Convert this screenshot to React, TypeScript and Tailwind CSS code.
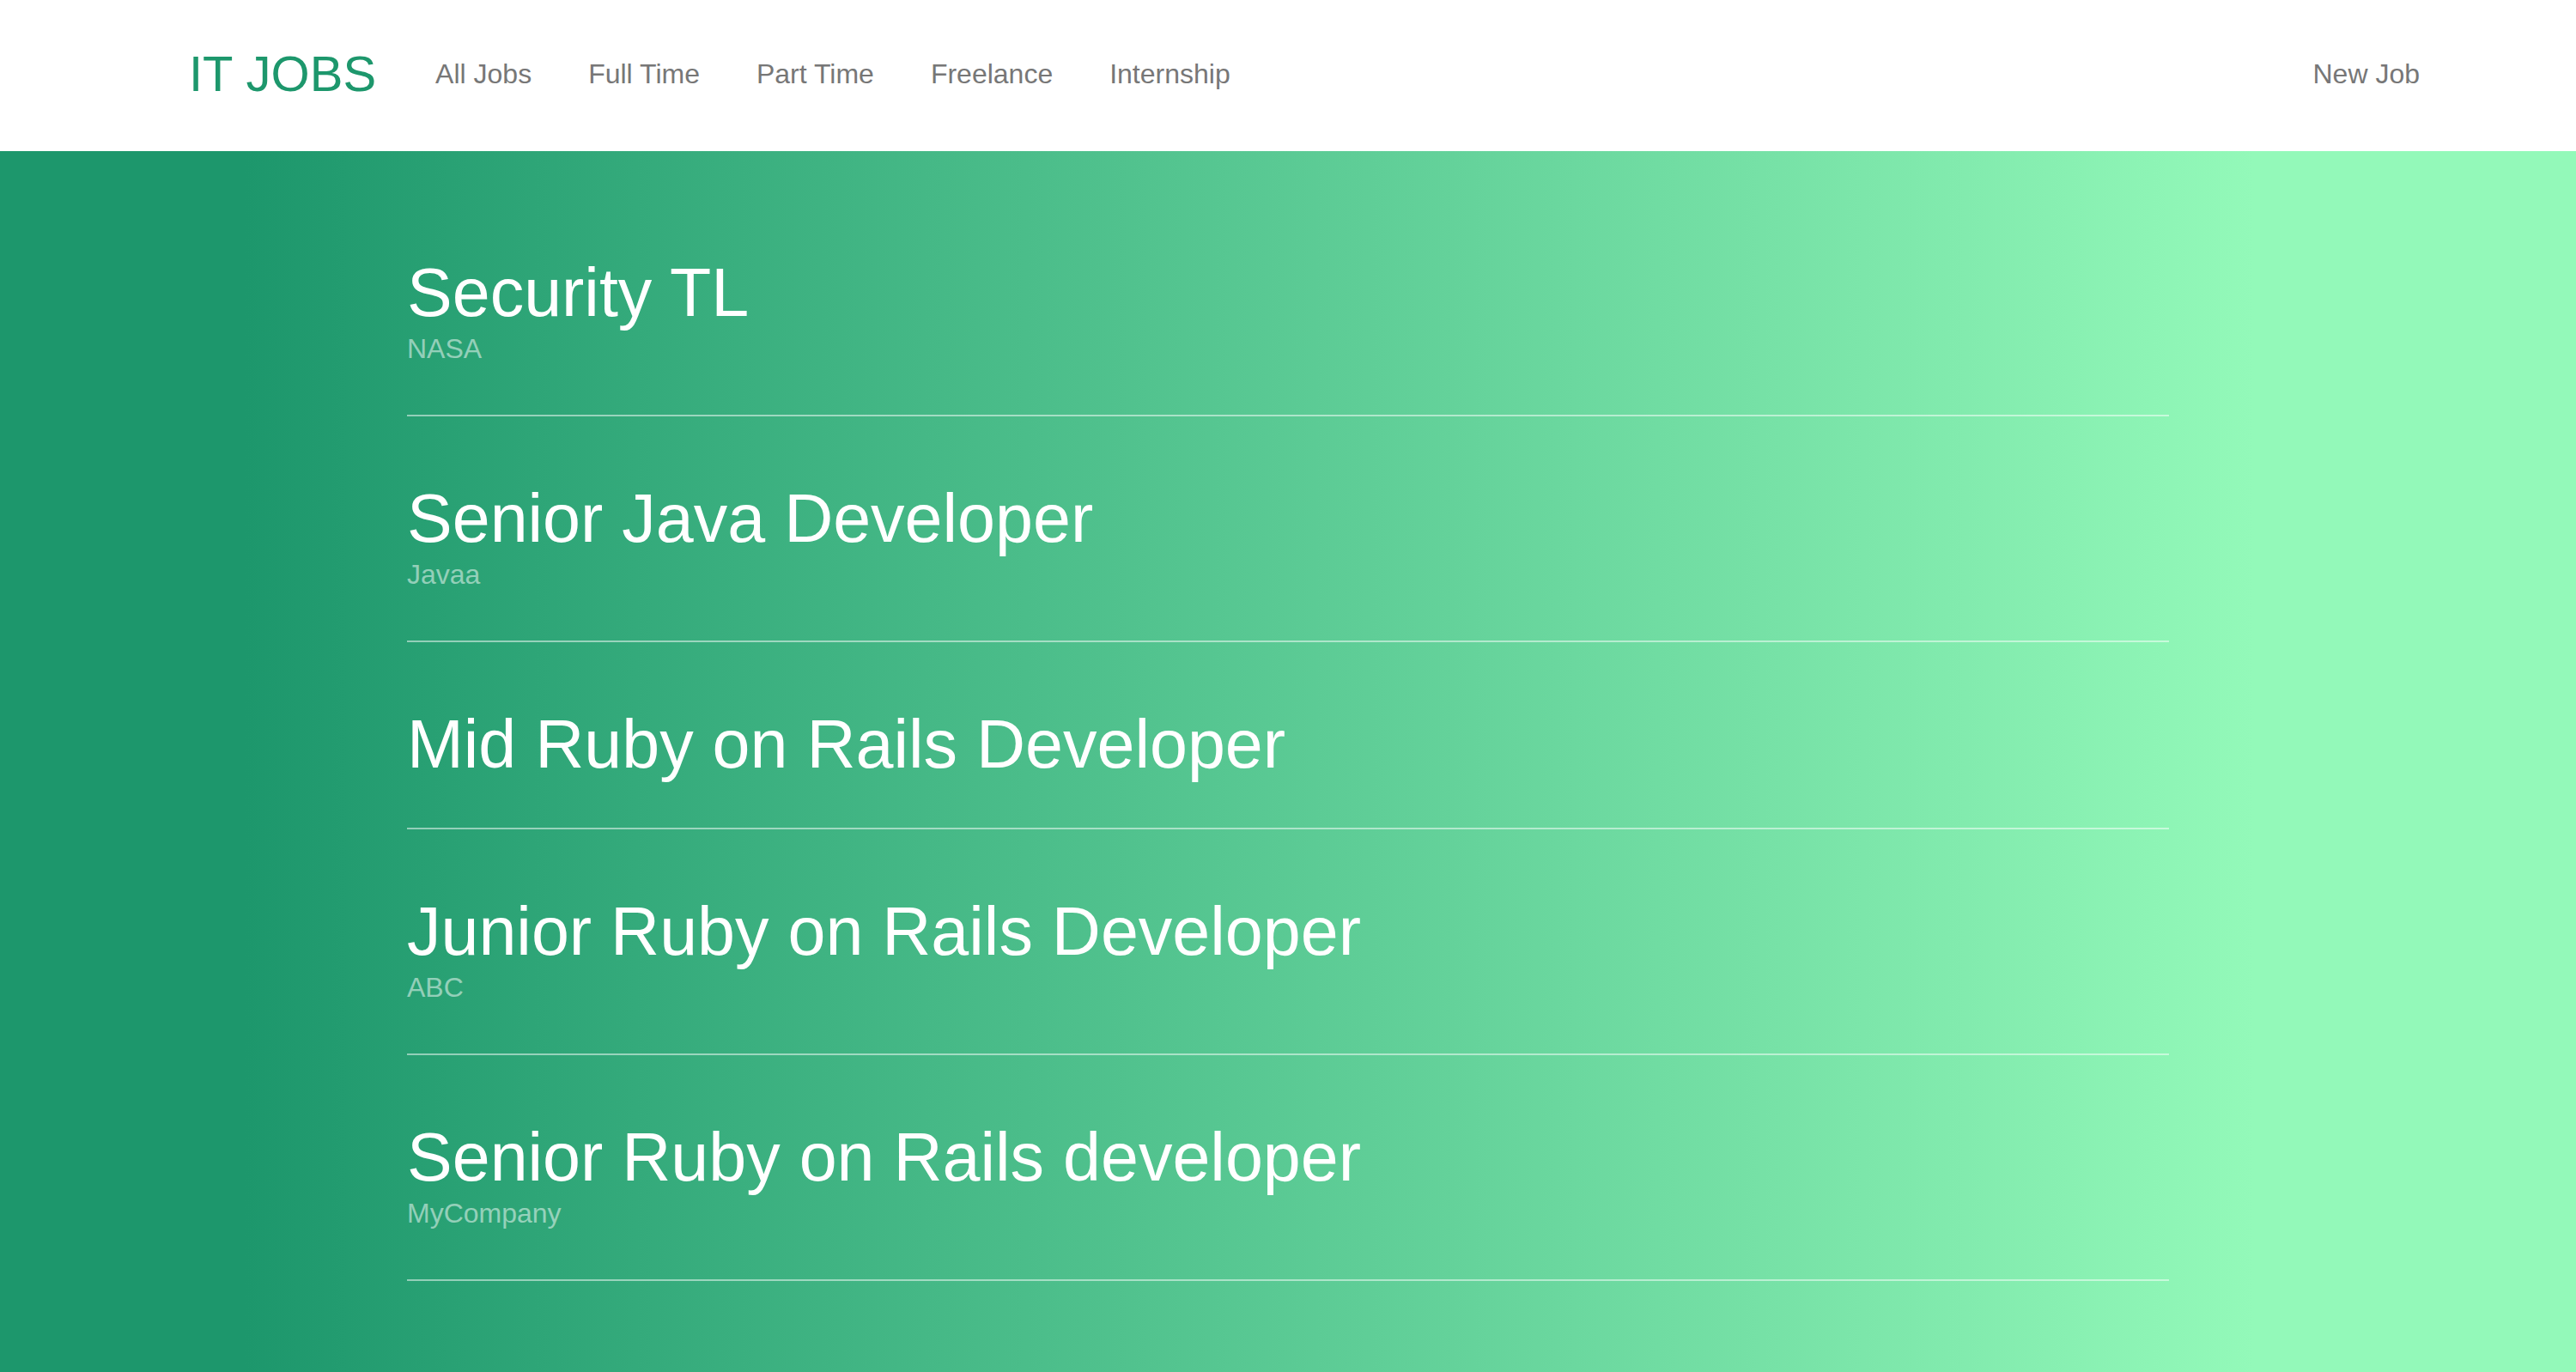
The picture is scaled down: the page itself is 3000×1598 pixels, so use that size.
const NAV_LINKS = ['All Jobs', 'Full Time', 'Part Time', 'Freelance', 'Internship'];

const JOBS = [
  { title: 'Security TL', company: 'NASA' },
  { title: 'Senior Java Developer', company: 'Javaa' },
  { title: 'Mid Ruby on Rails Developer', company: '' },
  { title: 'Junior Ruby on Rails Developer', company: 'ABC' },
  { title: 'Senior Ruby on Rails developer', company: 'MyCompany' },
];

function Navbar() {
  return (
    <header className="flex h-[176px] items-center bg-white pb-[4px] pl-[220px] pr-[149px]">
      {/* Brand */}
      <a href="#" className="text-[58px] leading-none text-[#1d976c]">
        IT JOBS
      </a>

      <ul className="ml-[36px] flex items-center">
        {NAV_LINKS.map((link) => (
          <li key={link}>
            <a href="#" className="block px-[33px] text-[32px] leading-none text-[#777777] hover:text-[#333333]">
              {link}
            </a>
          </li>
        ))}
      </ul>

      <a href="#" className="ml-auto block px-[33px] text-[32px] leading-none text-[#777777] hover:text-[#333333]">
        New Job
      </a>
    </header>
  );
}

function JobRow({ title, company }: { title: string; company: string }) {
  return (
    <div className="border-b-2 border-white/50 pb-[54px] pt-[76px]">
      <a href="#" className="block text-[79px] leading-[86px] text-white">
        {title}
      </a>
      {company && <div className="text-[32px] leading-[45px] text-white/50">{company}</div>}
    </div>
  );
}

export default function App() {
  return (
    <div className="min-h-[1598px] font-['Liberation_Sans',Arial,sans-serif]">
      <Navbar />

      <main className="min-h-[1422px] bg-[linear-gradient(to_right,#1d976c_9.5%,#93f9b9_87.5%)] pb-[80px] pt-[46px]">
        <div className="mx-auto w-[2052px]">
          {JOBS.map((job) => (
            <JobRow key={job.title} title={job.title} company={job.company} />
          ))}
        </div>
      </main>
    </div>
  );
}
